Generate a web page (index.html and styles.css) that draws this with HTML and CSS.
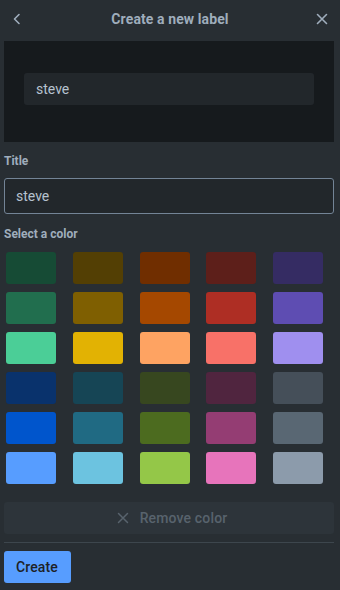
FILE: index.html
```html
<!DOCTYPE html>
<html>
<head>
<meta charset="utf-8">
<link rel="stylesheet" href="styles.css">
</head>
<body>
<div class="popover">
  <header class="header">
    <button class="icon-btn back" aria-label="Back">
      <svg width="16" height="16" viewBox="0 0 16 16"><path d="M10 3.5 L5.5 8 L10 12.5" fill="none" stroke="currentColor" stroke-width="1.6" stroke-linecap="round" stroke-linejoin="round"/></svg>
    </button>
    <h2 class="title">Create a new label</h2>
    <button class="icon-btn close" aria-label="Close">
      <svg width="16" height="16" viewBox="0 0 16 16"><path d="M3.5 3.5 L12.5 12.5 M12.5 3.5 L3.5 12.5" fill="none" stroke="currentColor" stroke-width="1.6" stroke-linecap="round"/></svg>
    </button>
  </header>
  <div class="content">
    <div class="preview">
      <div class="preview-label">steve</div>
    </div>
    <label class="field-label">Title</label>
    <div class="input">steve</div>
    <div class="field-label second">Select a color</div>
    <div class="swatches">
      <span class="sw" style="background:#164B35"></span>
      <span class="sw" style="background:#533F04"></span>
      <span class="sw" style="background:#702E00"></span>
      <span class="sw" style="background:#5D1F1A"></span>
      <span class="sw" style="background:#352C63"></span>
      <span class="sw" style="background:#216E4E"></span>
      <span class="sw" style="background:#7F5F01"></span>
      <span class="sw" style="background:#A54800"></span>
      <span class="sw" style="background:#AE2E24"></span>
      <span class="sw" style="background:#5E4DB2"></span>
      <span class="sw" style="background:#4BCE97"></span>
      <span class="sw" style="background:#E2B203"></span>
      <span class="sw" style="background:#FEA362"></span>
      <span class="sw" style="background:#F87168"></span>
      <span class="sw" style="background:#9F8FEF"></span>
      <span class="sw" style="background:#09326C"></span>
      <span class="sw" style="background:#164555"></span>
      <span class="sw" style="background:#37471F"></span>
      <span class="sw" style="background:#50253F"></span>
      <span class="sw" style="background:#454F59"></span>
      <span class="sw" style="background:#0055CC"></span>
      <span class="sw" style="background:#206A83"></span>
      <span class="sw" style="background:#4C6B1F"></span>
      <span class="sw" style="background:#943D73"></span>
      <span class="sw" style="background:#596773"></span>
      <span class="sw" style="background:#579DFF"></span>
      <span class="sw" style="background:#6CC3E0"></span>
      <span class="sw" style="background:#94C748"></span>
      <span class="sw" style="background:#E774BB"></span>
      <span class="sw" style="background:#8C9BAB"></span>
    </div>
    <button class="remove" disabled>
      <svg width="16" height="16" viewBox="0 0 16 16"><path d="M3.5 3.5 L12.5 12.5 M12.5 3.5 L3.5 12.5" fill="none" stroke="currentColor" stroke-width="1.5" stroke-linecap="round"/></svg>
      <span>Remove color</span>
    </button>
    <hr class="sep">
    <button class="create">Create</button>
  </div>
</div>
</body>
</html>
```

FILE: styles.css
```css
html, body {
  margin: 0;
  padding: 0;
  background: #282e33;
  font-family: Roboto, "Noto Sans", "Liberation Sans", sans-serif;
  color: #b6c2cf;
}

.popover {
  width: 340px;
  height: 590px;
  background: #282e33;
}

.header {
  display: grid;
  grid-template-columns: 32px 1fr 32px;
  align-items: center;
  padding: 0 4px 6px 4px;
  box-sizing: border-box;
  height: 41px;
}

.icon-btn {
  background: none;
  border: none;
  padding: 0;
  width: 32px;
  height: 32px;
  display: flex;
  align-items: center;
  justify-content: center;
  color: #9fadbc;
  margin-top: 2px;
}

.back { justify-self: start; margin-left: -3px; }
.close { justify-self: end; margin-right: -2px; }

.title {
  margin: 0;
  margin-top: 2px;
  text-align: center;
  font-size: 14px;
  font-weight: 700;
  letter-spacing: 0.1px;
  color: #9fadbc;
  line-height: 20px;
}

.content {
  padding: 0 6px 0 4px;
}

.preview {
  background: #161a1d;
  height: 101px;
  padding: 32px 20px 0 20px;
  box-sizing: border-box;
}

.preview-label {
  background: #22272b;
  height: 32px;
  border-radius: 3px;
  padding-left: 12px;
  line-height: 32px;
  font-size: 14px;
  color: #b6c2cf;
}

.field-label {
  display: block;
  margin-top: 11px;
  margin-bottom: 9px;
  font-size: 12px;
  font-weight: 700;
  line-height: 16px;
  color: #9fadbc;
}

.field-label.second {
  margin-top: 12px;
  margin-bottom: 10px;
}

.input {
  height: 36px;
  box-sizing: border-box;
  border: 1px solid #738496;
  border-radius: 3px;
  background: #22272b;
  padding-left: 11px;
  line-height: 34px;
  font-size: 14px;
  color: #b6c2cf;
}

.swatches {
  display: grid;
  grid-template-columns: repeat(5, 50px);
  column-gap: 16.75px;
  row-gap: 8px;
  padding-left: 2px;
}

.sw {
  display: block;
  height: 32px;
  border-radius: 3px;
}

.remove {
  margin-top: 18px;
  width: 100%;
  height: 32px;
  border: none;
  border-radius: 3px;
  background: #2d343a;
  color: #58636d;
  font-family: inherit;
  font-size: 14px;
  font-weight: 500;
  letter-spacing: 0.15px;
  display: flex;
  align-items: center;
  justify-content: center;
  gap: 9px;
  padding: 0 0 0 4px;
}

.sep {
  margin: 8px 0 0 0;
  border: none;
  height: 1px;
  background: #3d464d;
}

.create {
  margin-top: 8px;
  height: 32px;
  padding: 0 13px 0 12px;
  border: none;
  border-radius: 3px;
  background: #579dff;
  color: #1d2125;
  font-family: inherit;
  font-size: 14px;
  font-weight: 500;
  letter-spacing: 0.1px;
}
```
